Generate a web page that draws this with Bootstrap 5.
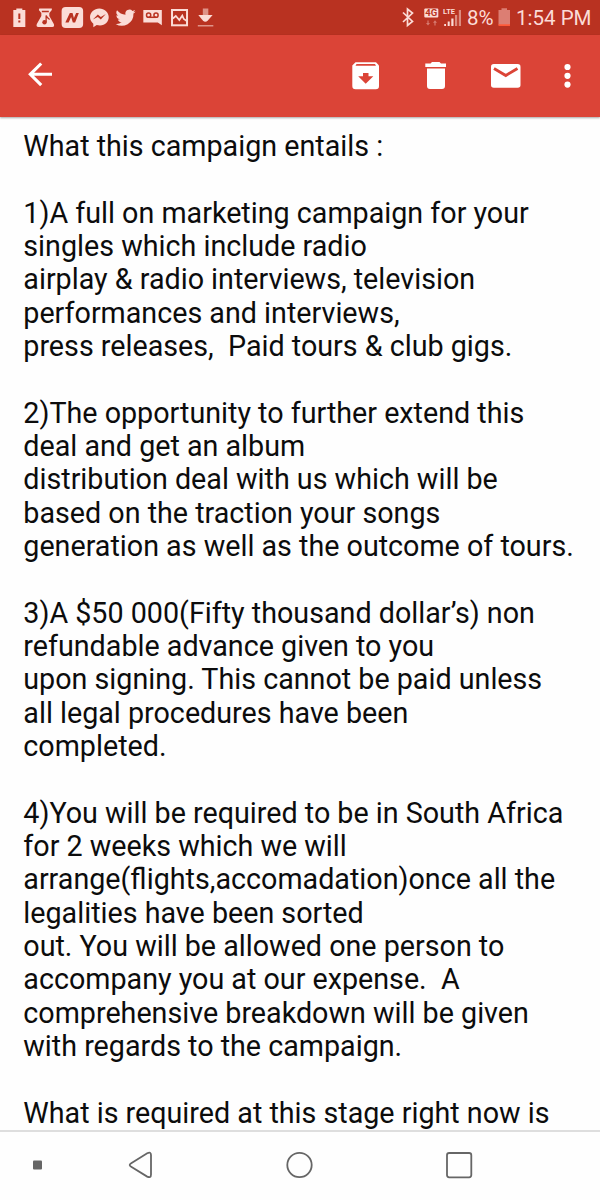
<!DOCTYPE html>
<html lang="en">
<head>
<meta charset="utf-8">
<meta name="viewport" content="width=device-width, initial-scale=1">
<title>Mail</title>
<link href="https://cdn.jsdelivr.net/npm/bootstrap@5.3.0/dist/css/bootstrap.min.css" rel="stylesheet">
<style>
body{font-family:Roboto,"Liberation Sans",sans-serif;background:#fefefe;color:#0c0c0c}
.screen{height:1200px}
svg{display:block;flex:none}
.statusbar{height:35px;background:#b93221;color:#fbdcd7;font-size:20.5px;line-height:36px;padding-left:5.7px;padding-right:8.5px}
.statusbar .tray svg{width:26.65px;height:35px}
.level{width:30px;padding-left:2px}
.appbar{height:82px;background:#db4437;box-shadow:0 1px 2px rgba(0,0,0,.35);padding:0 8px 0 20px;z-index:1;color:#fff}
.appbar button{border:0;background:none;color:inherit;padding:0}
.message{padding:13px 0 0 23.3px;font-size:28.7px;line-height:33.33px;white-space:pre}
.message p{margin-bottom:33.33px}
.sysnav{height:70px;border-top:2px solid #dedede;background:#fefefe;padding-left:17px;color:#666}
</style>
</head>
<body>
<div class="screen d-flex flex-column overflow-hidden">
  <header class="statusbar d-flex justify-content-between flex-shrink-0">
    <div class="tray d-flex">
      <svg viewBox="-13.3 0 26.6 35" fill="#fbdcd7"><path d="M-6 10h3V8.500h6V10h3v17H-6z"/><path d="M-1 13.500h2v5.500h-2zM-1 20.500h2v2h-2z" fill="#b93221"/></svg>
      <svg viewBox="-13.3 0 26.6 35" fill="#fbdcd7"><path d="M-6 8.500H6.500V10L4 13v3l4.500 8q1 3-1.500 3H-7q-2.500 0-1.500-3l4.500-8v-3L-6.500 10z"/><path d="M-3.500 11.500h7M.800 22V15.500q1 2.500 3.500 4" fill="none" stroke="#b93221" stroke-width="1.300"/><circle cx="-.8" cy="22.200" r="2.200" fill="#b93221"/></svg>
      <svg viewBox="-13.3 0 26.6 35" fill="#fbdcd7"><rect x="-10.700" y="7" width="21.500" height="21" rx="4"/><path d="M-7 22.500l4.500-9.500h2.700l1.400 5 2.200-5H6.500L2.800 22.500H.5l-1.700-5.500-2.500 5.500z" fill="#b93221"/></svg>
      <svg viewBox="-13.3 0 26.6 35" fill="#fbdcd7"><path d="M0 8.500c-5 0-9.300 3.700-9.300 8.600 0 2.700 1.200 5 3.300 6.600V27.300l3.400-2.200c7 1.800 12-2.300 12-8C9.400 12.200 5 8.500 0 8.500z"/><path d="M-6.500 19.500l5-5 3 2.500 5-3-5 5.500-3-2.500z" fill="#b93221"/></svg>
      <svg viewBox="-13.3 0 26.6 35" fill="#fbdcd7"><path transform="translate(-9.700 7.700) scale(.83)" d="M24 4.600a10 10 0 0 1-2.800.8 5 5 0 0 0 2.200-2.700c-1 .6-2 1-3.100 1.200a4.900 4.900 0 0 0-8.400 4.500A14 14 0 0 1 1.700 3.100a4.900 4.900 0 0 0 1.500 6.600 5 5 0 0 1-2.200-.6 4.900 4.900 0 0 0 4 4.900 5 5 0 0 1-2.300.1 4.900 4.900 0 0 0 4.600 3.400A9.900 9.900 0 0 1 0 19.500 14 14 0 0 0 21.500 7.100 10 10 0 0 0 24 4.600z"/></svg>
      <svg viewBox="-13.3 0 26.6 35" fill="#fbdcd7"><path d="M-9 10H9.500V25.300L5.500 22.500H-9z"/><g fill="none" stroke="#b93221" stroke-width="1.500"><circle cx="-3.700" cy="15.200" r="2.100"/><circle cx="3.700" cy="15.200" r="2.100"/><path d="M-3.700 17.300h7.400"/></g></svg>
      <svg viewBox="-13.3 0 26.6 35" fill="none" stroke="#fbdcd7" stroke-width="2"><rect x="-7.300" y="10" width="15" height="15.300"/><path d="M-6.500 18.500l3-2.500 3.500 4 3-4.500 1.500 3.500 3 2" stroke-width="1.700"/></svg>
      <svg viewBox="-13.3 0 26.6 35"><path d="M-2.500 8.500h5.500V15h-5.500z" fill="#df9388"/><path d="M-7 15H7.300L2.500 20.500q-2.500 2.500-5 0z" fill="#fbdcd7"/><path d="M-7.500 25H8v1.500H-7.500z" fill="#df9388"/></svg>
    </div>
    <div class="d-flex">
      <svg width="14" height="35" viewBox="401 0 14 35" fill="none" stroke="#fbdcd7" stroke-width="1.700"><path d="M403 12.500l9.500 9-5 4V9l5 4-9.500 9"/></svg>
      <svg width="50" height="35" viewBox="415 0 50 35" fill="#fbdcd7"><rect x="424.300" y="8.500" width="14" height="9" rx="1"/><text x="431.300" y="16.200" font-size="9.500" font-weight="700" text-anchor="middle" fill="#b93221">4G</text><path d="M426 23h1.400v-2.500h1.200V23h1.400l-2 2.500zM433 22.700h1.400v2.800h1.200v-2.800h1.400l-2-2.400z" fill="#d77b70"/><text x="443" y="14.200" font-size="8" font-weight="700" textLength="12" lengthAdjust="spacingAndGlyphs">LTE</text><path d="M444.200 24h1.800v2h-1.800zM447.700 21.500h2V26h-2zM451.300 18.500h2.200V26h-2.200z"/><path d="M455 15h2.200v11H455zM458.800 10h2.200v16h-2.200z" fill="#dc8c80"/></svg>
      <span class="level">8%</span>
      <svg width="21" height="35" viewBox="495 0 21 35"><path d="M498.500 10h3V8.300h5.500V10h3v15h-11.500z" fill="#dc7e73"/><path d="M498.500 24.300H510V26h-11.500z" fill="#ff5937"/></svg>
      <span>1:54 PM</span>
    </div>
  </header>
  <nav class="appbar d-flex align-items-center justify-content-between flex-shrink-0 position-relative">
    <button aria-label="Back"><svg width="40" height="82" viewBox="20 35 40 82" fill="none" stroke="#fff" stroke-width="3.100"><path d="M52 74.300H30.500M41.200 63.500L30.300 74.300 41.200 85.200"/></svg></button>
    <div class="d-flex">
      <button aria-label="Archive"><svg width="70" height="82" viewBox="331 35 70 82"><path d="M355.500 62.300h20.500l3 3.300V86q0 3.200-3.200 3.200h-20.300q-3.200 0-3.200-3.200V65.600z" fill="#fff"/><path d="M356.500 64h18.500l1 1.700h-20.500zM363 73h5.500v3.200h4.800L365.700 83.700 358.200 76.200H363z" fill="#db4437"/></svg></button>
      <button aria-label="Delete"><svg width="70" height="82" viewBox="401 35 70 82" fill="#fff"><path d="M425.300 63.500h5.200l1.500-1.500h7.500l1.500 1.500h5V67h-20.700zM427 68.500h18V86q0 3-3 3h-12q-3 0-3-3z"/></svg></button>
      <button aria-label="Mark unread"><svg width="70" height="82" viewBox="471 35 70 82"><rect x="491" y="64" width="29.500" height="23.800" rx="2.800" fill="#fff"/><path d="M494 68.500L505.800 75.500 517.500 68.500" fill="none" stroke="#db4437" stroke-width="2.800"/></svg></button>
      <button aria-label="More"><svg width="51" height="82" viewBox="541 35 51 82" fill="#fff"><circle cx="567.500" cy="67" r="3.100"/><circle cx="567.500" cy="75.800" r="3.100"/><circle cx="567.500" cy="84.600" r="3.100"/></svg></button>
    </div>
  </nav>
  <main class="message flex-grow-1 overflow-hidden"><p>What this campaign entails :</p><p>1)A full on marketing campaign for your
singles which include radio
airplay &amp; radio interviews, television
performances and interviews,
press releases,  Paid tours &amp; club gigs.</p><p>2)The opportunity to further extend this
deal and get an album
distribution deal with us which will be
based on the traction your songs
generation as well as the outcome of tours.</p><p>3)A $50 000(Fifty thousand dollar’s) non
refundable advance given to you
upon signing. This cannot be paid unless
all legal procedures have been
completed.</p><p>4)You will be required to be in South Africa
for 2 weeks which we will
arrange(flights,accomadation)once all the
legalities have been sorted
out. You will be allowed one person to
accompany you at our expense.  A
comprehensive breakdown will be given
with regards to the campaign.</p><p>What is required at this stage right now is</p></main>
  <footer class="sysnav d-flex flex-shrink-0">
    <svg width="583" height="68" viewBox="17 1132 583 68" fill="none" stroke="currentColor" stroke-width="1.800"><rect x="33" y="1160.500" width="9" height="9" rx="1" fill="currentColor" stroke="none"/><path d="M131.200 1163.200L147.200 1153.200Q151 1151.300 151 1155V1174.500Q151 1178.300 147.200 1176.600L131.200 1166.800Q128.200 1165 131.200 1163.200z"/><circle cx="299.500" cy="1165" r="12.200"/><rect x="447" y="1153" width="24.300" height="24.300" rx="2.200"/></svg>
  </footer>
</div>
<script src="https://cdn.jsdelivr.net/npm/bootstrap@5.3.0/dist/js/bootstrap.bundle.min.js"></script>
</body>
</html>
